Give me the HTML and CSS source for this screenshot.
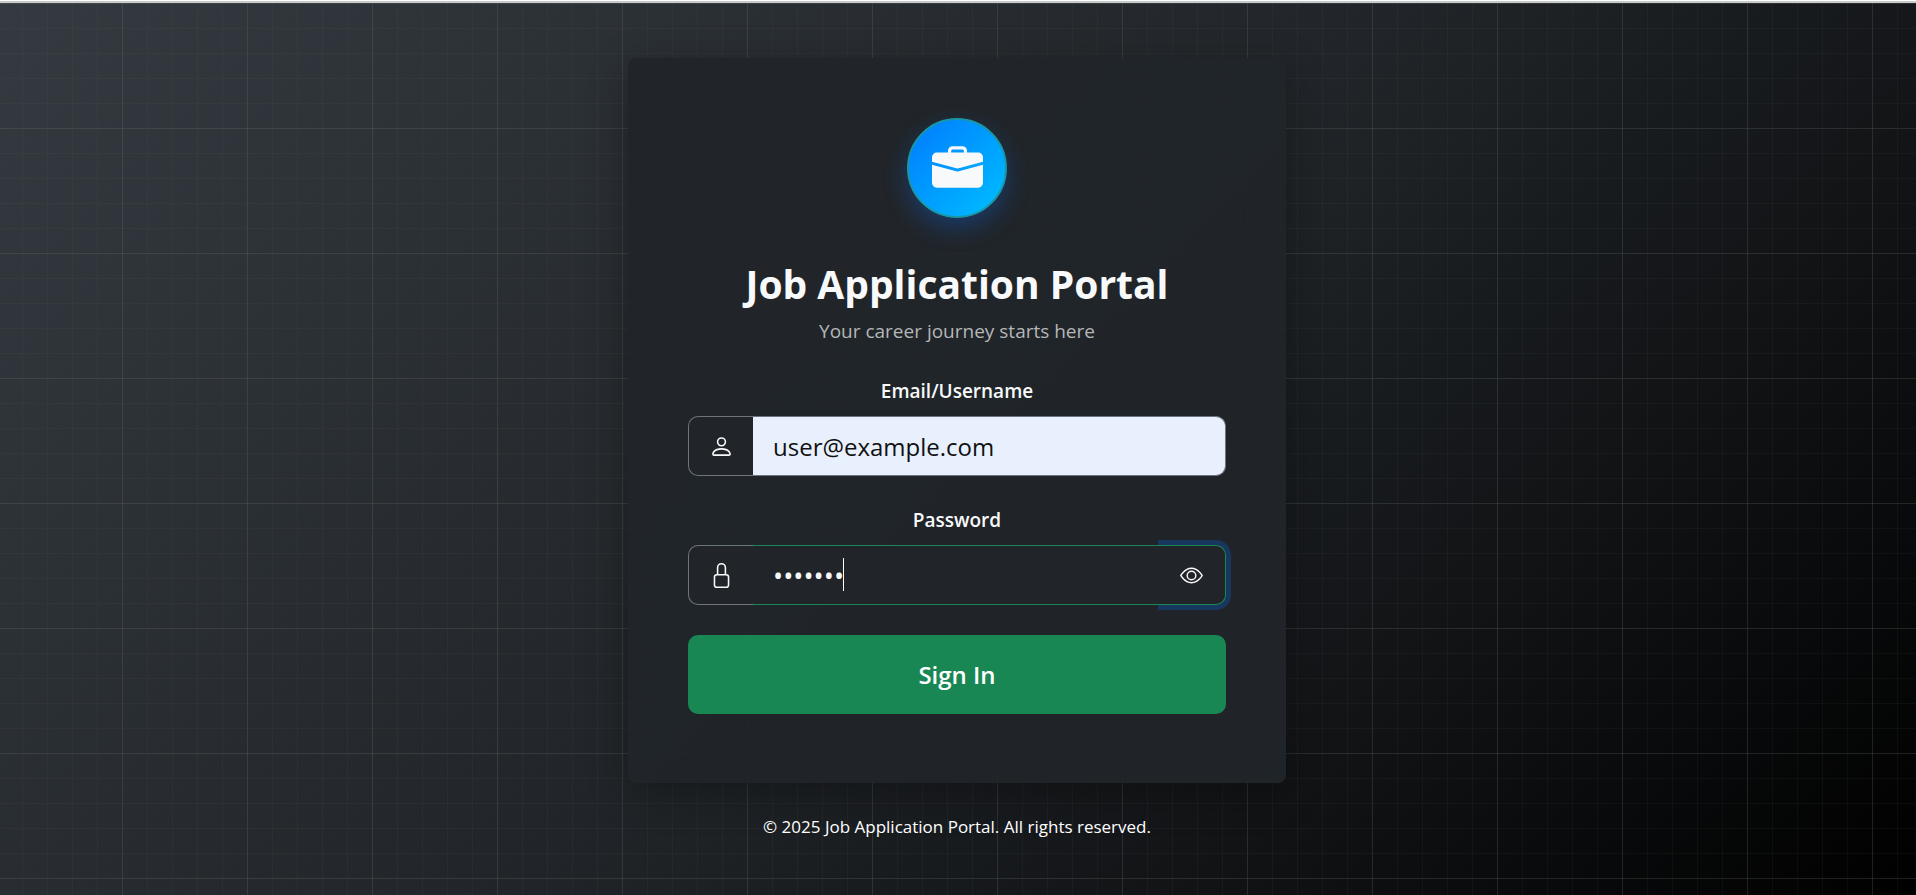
FILE: index.html
```html
<!DOCTYPE html>
<html lang="en">
<head>
<meta charset="utf-8">
<meta name="viewport" content="width=device-width, initial-scale=1">
<title>Job Application Portal</title>
<link rel="stylesheet" href="styles.css">
</head>
<body>
<div class="page">
  <main class="card">
    <div class="logo">
      <svg class="logo-icon" viewBox="0 0 16 16" fill="currentColor" aria-hidden="true"><path d="M6.5 1A1.5 1.5 0 0 0 5 2.5V3H1.500A1.5 1.5 0 0 0 0 4.500v1.384l7.614 2.030a1.5 1.5 0 0 0 .772 0L16 5.884V4.500A1.5 1.5 0 0 0 14.500 3H11v-.5A1.5 1.5 0 0 0 9.500 1zm0 1h3a.5.5 0 0 1 .5.5V3H6v-.5a.5.5 0 0 1 .5-.5"/><path d="M0 12.500A1.5 1.5 0 0 0 1.500 14h13a1.5 1.5 0 0 0 1.500-1.500V6.850L8.129 8.947a.5.5 0 0 1-.258 0L0 6.850z"/></svg>
    </div>
    <h1 class="title">Job Application Portal</h1>
    <p class="subtitle">Your career journey starts here</p>
    <form class="form">
      <div class="field">
        <label class="label" for="user">Email/Username</label>
        <div class="group">
          <span class="addon"><svg class="icon" viewBox="0 0 16 16" fill="currentColor" aria-hidden="true"><path d="M8 8a3 3 0 1 0 0-6 3 3 0 0 0 0 6m2-3a2 2 0 1 1-4 0 2 2 0 0 1 4 0m4 8c0 1-1 1-1 1H3s-1 0-1-1 1-4 6-4 6 3 6 4m-1-.004c-.001-.246-.154-.986-.832-1.664C11.516 10.680 10.289 10 8 10s-3.516.680-4.168 1.332c-.678.678-.830 1.418-.832 1.664z"/></svg></span>
          <input class="input input-filled" id="user" type="text" value="user@example.com">
        </div>
      </div>
      <div class="field">
        <label class="label" for="password">Password</label>
        <div class="group">
          <span class="addon"><svg class="icon" viewBox="0 0 16 16" fill="currentColor" aria-hidden="true"><path d="M8 1a2 2 0 0 1 2 2v4H6V3a2 2 0 0 1 2-2m3 6V3a3 3 0 0 0-6 0v4a2 2 0 0 0-2 2v5a2 2 0 0 0 2 2h6a2 2 0 0 0 2-2V9a2 2 0 0 0-2-2M5 8h6a1 1 0 0 1 1 1v5a1 1 0 0 1-1 1H5a1 1 0 0 1-1-1V9a1 1 0 0 1 1-1"/></svg></span>
          <input class="input input-active" id="password" type="password" value="example">
          <span class="caret"></span>
          <button class="reveal" type="button" aria-label="Show password"><svg class="icon-eye" viewBox="0 0 16 16" fill="currentColor" aria-hidden="true"><path d="M16 8s-3-5.500-8-5.500S0 8 0 8s3 5.500 8 5.500S16 8 16 8M1.173 8a13 13 0 0 1 1.660-2.043C4.120 4.668 5.880 3.500 8 3.500s3.879 1.168 5.168 2.457A13 13 0 0 1 14.828 8q-.086.130-.195.288c-.335.480-.830 1.120-1.465 1.755C11.879 11.332 10.119 12.500 8 12.500s-3.879-1.168-5.168-2.457A13 13 0 0 1 1.172 8z"/><path d="M8 5.500a2.5 2.5 0 1 0 0 5 2.5 2.5 0 0 0 0-5M4.500 8a3.5 3.5 0 1 1 7 0 3.5 3.5 0 0 1-7 0"/></svg></button>
        </div>
      </div>
      <button class="submit" type="submit">Sign In</button>
    </form>
  </main>
  <footer class="footer">© 2025 Job Application Portal. All rights reserved.</footer>
</div>
</body>
</html>
```
FILE: styles.css
```css
*, *::before, *::after { box-sizing: border-box; }

body {
  margin: 0;
  min-height: 100vh;
  display: flex;
  flex-direction: column;
  border-top: 1px solid #fff;
  background: #000;
  color: #f8f9fa;
  font-family: "Segoe UI", "Open Sans", "Noto Sans", sans-serif;
}

.page {
  --major: rgba(110, 114, 110, 0.2);
  --minor: rgba(110, 114, 110, 0.08);
  flex: 1;
  display: flex;
  flex-direction: column;
  align-items: center;
  padding: 55px 26px 24px 24px;
  border-top: 2px solid #c6cbca;
  background-image:
    linear-gradient(to right, var(--major) 1px, transparent 1px),
    linear-gradient(to bottom, var(--major) 1px, transparent 1px),
    linear-gradient(to right, var(--minor) 1px, transparent 1px),
    linear-gradient(to bottom, var(--minor) 1px, transparent 1px),
    linear-gradient(135deg, #343a40 0%, #212529 50%, #000 100%);
  background-size: 125px 125px, 125px 125px, 25px 25px, 25px 25px, 100% 100%;
  background-position: 122px 0, 122px 0, 22px 0, 22px 0, 0 0;
}

.card {
  width: 100%;
  max-width: 658px;
  padding: 60px 60px 69px;
  border-radius: 8px;
  background: rgba(33, 37, 41, 0.95);
  box-shadow: 0 10px 40px rgba(0, 0, 0, 0.3);
  text-align: center;
}

.logo {
  width: 100px;
  height: 100px;
  margin: 0 auto 40px;
  display: flex;
  align-items: center;
  justify-content: center;
  border: 2px solid #1997a5;
  border-radius: 50%;
  background: linear-gradient(135deg, #007bff, #00bfff);
  box-shadow: 0 10px 25px rgba(13, 110, 253, 0.3);
}

.logo-icon { width: 51px; height: 51px; }

.title {
  margin: 0;
  font-size: 39px;
  line-height: 52px;
  font-weight: 700;
}

.subtitle {
  margin: 6px 0 31px;
  color: #b4b6b8;
  font-size: 19px;
  line-height: 30px;
}

.form { display: flex; flex-direction: column; gap: 30px; }

.field { display: flex; flex-direction: column; gap: 11px; }

.label {
  font-size: 19px;
  line-height: 28px;
  font-weight: 600;
}

.group {
  position: relative;
  display: flex;
  height: 60px;
}

.addon {
  width: 65px;
  display: flex;
  align-items: center;
  justify-content: center;
  border: 1px solid #6c757d;
  border-right: 0;
  border-radius: 10px 0 0 10px;
  background: #212529;
}

.icon { width: 25px; height: 25px; }

.input {
  flex: 1;
  min-width: 0;
  padding: 0 20px;
  border: 1px solid #6c757d;
  border-left: 0;
  border-radius: 0;
  outline: 0;
  background: #212529;
  color: #f8f9fa;
  font: inherit;
  font-size: 24px;
}

.input-filled {
  border-radius: 0 10px 10px 0;
  background: #e8f0fe;
  color: #111;
}

.input-active {
  border-color: #198754;
  border-right: 0;
  font-size: 27px;
}

.caret {
  position: absolute;
  top: 13px;
  left: 155px;
  width: 1px;
  height: 33px;
  background: #fff;
}

.reveal {
  width: 68px;
  display: flex;
  align-items: center;
  justify-content: center;
  padding: 0;
  border: 1px solid #198754;
  border-left: 0;
  border-radius: 0 10px 10px 0;
  background: #212529;
  color: #f8f9fa;
  box-shadow: 0 0 0 5px #17375f;
  clip-path: inset(-5px -5px -5px 0);
}

.icon-eye { width: 23px; height: 23px; }

.submit {
  height: 79px;
  border: 0;
  border-radius: 10px;
  background: #198754;
  color: #fff;
  font: inherit;
  font-size: 24px;
  font-weight: 600;
}

.footer {
  margin-top: 30px;
  color: #fff;
  font-size: 17px;
  line-height: 28px;
  text-align: center;
}
```
